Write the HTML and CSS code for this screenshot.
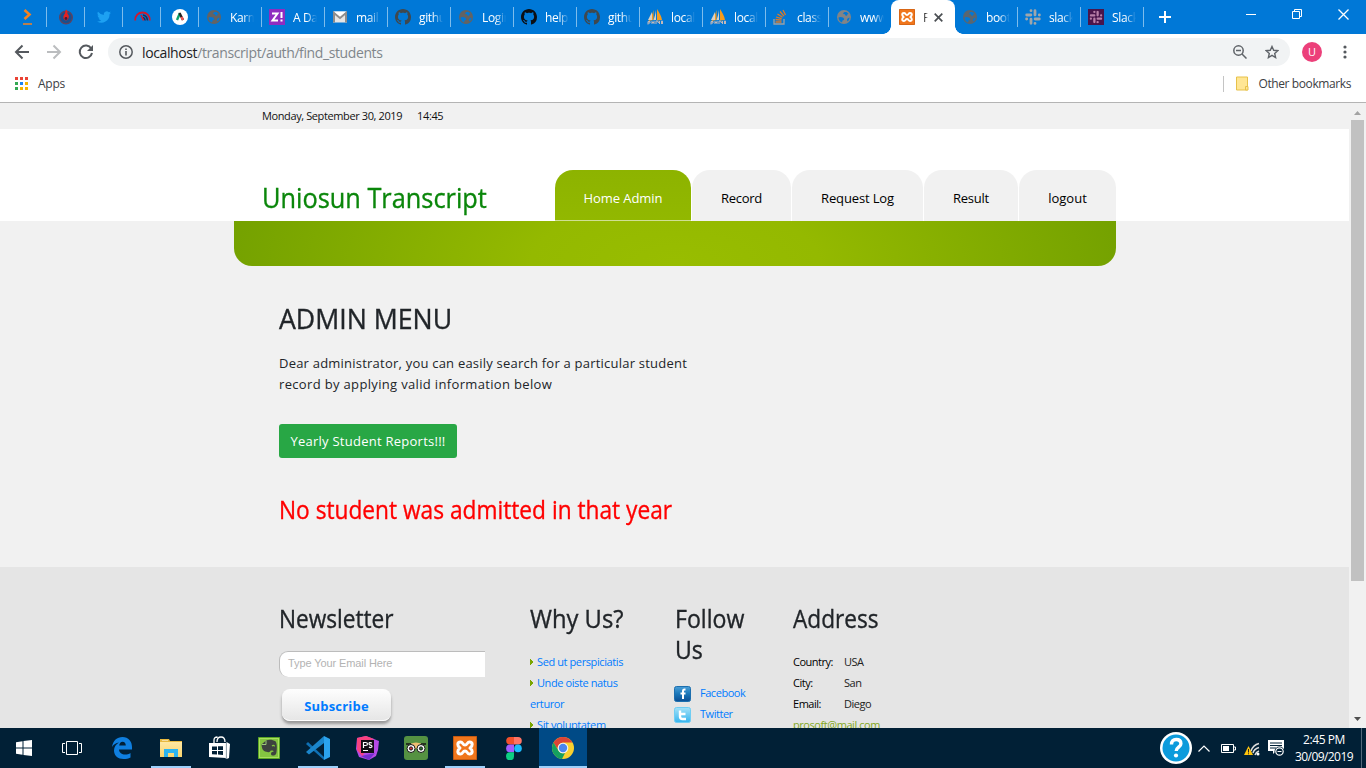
FILE: index.html
```html
<!DOCTYPE html>
<html lang="en">
<head>
<meta charset="utf-8">
<title>Find Students</title>
<link rel="stylesheet" href="styles.css">
</head>
<body>
<svg class="defs" width="0" height="0">
  <defs>
    <linearGradient id="fbg" x1="0" y1="0" x2="0" y2="1"><stop offset="0" stop-color="#4a9fd8"/><stop offset=".5" stop-color="#1976b8"/><stop offset="1" stop-color="#0a4e94"/></linearGradient>
    <linearGradient id="twg" x1="0" y1="0" x2="0" y2="1"><stop offset="0" stop-color="#a5e2f8"/><stop offset="1" stop-color="#35b4ee"/></linearGradient>
    <linearGradient id="fold" x1="0" y1="0" x2="0" y2="1"><stop offset="0" stop-color="#ffe8a3"/><stop offset="1" stop-color="#fbd46d"/></linearGradient>
    <symbol id="globe" viewBox="0 0 16 16"><circle cx="8" cy="8" r="7"/><path fill="#0078d7" d="M2.500 8.500l2-.5 2.500.5 1.200 1.300-.3 1.200-1.400.5-.5 2C4 12.800 2.600 11 2.500 8.500zM8.500 3l2 0 2 1.800-1 .5-.6 1.400-1.500-.2-.5-1.200-1.700-.4.1-1zM13.500 8.500c0 1.600-.7 3-1.900 3.900l-.7-1.600.9-1.600z"/></symbol>
    <symbol id="git" viewBox="0 0 16 16"><path d="M8 0C3.580 0 0 3.580 0 8c0 3.540 2.290 6.530 5.470 7.590.4.070.55-.17.55-.38 0-.19-.01-.82-.01-1.490-2.010.37-2.530-.49-2.690-.94-.09-.23-.48-.94-.82-1.130-.28-.15-.68-.52-.01-.53.63-.01 1.080.58 1.230.82.72 1.210 1.870.87 2.330.66.070-.52.28-.87.51-1.070-1.780-.2-3.640-.89-3.640-3.950 0-.87.31-1.590.82-2.150-.08-.2-.36-1.020.08-2.120 0 0 .67-.21 2.200.82.64-.18 1.320-.27 2-.27s1.360.09 2 .27c1.530-1.040 2.200-.82 2.200-.82.44 1.100.16 1.920.08 2.120.51.56.82 1.270.82 2.150 0 3.070-1.870 3.750-3.650 3.950.29.25.54.73.54 1.480 0 1.070-.01 1.930-.01 2.200 0 .21.15.46.55.38A8 8 0 0 0 16 8c0-4.420-3.580-8-8-8z"/></symbol>
    <symbol id="pma" viewBox="0 0 16 16"><path fill="#f89c1c" d="M6.500 1v10l-5 1C4 9 5.500 5 6.500 1zM10 0c2 3 4.500 7 5 11l-5 .5z"/><path fill="#d9d0c4" d="M5 3v8H1zM9 1v10l-2.500.3C7.500 8 8.500 5 9 1z"/><path fill="none" stroke="#c4b8b8" stroke-width="1" d="M1 15.500v-3h2v1.500H1m4-2v3m0-1.500h2m0-1.500v3m2 0v-3h1.500l1 2 1-2v3m2 0v-3h1v3"/></symbol>
    <symbol id="xampp" viewBox="0 0 24 24"><rect width="24" height="24" rx="2" fill="#f0761c"/><path fill="none" stroke="#c65a10" stroke-width="1" d="M.5.500h23v23H.5z"/><path fill="none" stroke="#fff" stroke-width="3" stroke-linecap="round" stroke-linejoin="round" d="M7.500 6C4 6 4 10 7 12c-3 2-3 6 .5 6 2.500 0 2-3 4.500-3s2 3 4.500 3c3.500 0 3.500-4 .5-6 3-2 3-6-.5-6-2.500 0-2 3-4.500 3s-2-3-4.500-3z"/></symbol>
    <symbol id="slack" viewBox="0 0 16 16"><path fill="none" stroke-width="2.800" stroke-linecap="round" d="M6 1.600v.1M1.700 6h4.200M10 1.700v4.200M14.300 6h.1M10.100 10h4.200M10 14.300v.1M6 10.100v4.200M1.600 10h.1"/></symbol>
  </defs>
</svg>

<header class="tabstrip">
  <div class="tab pin"><svg width="14" height="16" viewBox="0 0 14 16"><path d="M3.500 1l5 4.500-5 4.500" fill="none" stroke="#f58220" stroke-width="2.600"/><path d="M2 15h9" stroke="#f58220" stroke-width="1.500"/></svg></div>
  <div class="tab pin"><svg width="16" height="16" viewBox="0 0 16 16"><circle cx="8" cy="8.500" r="6.300" fill="#17508f" stroke="#5d4260" stroke-width="1.400"/><path d="M8 .5c3 2 0 3.500 2.500 5.500 1 2.500-.5 5-2.500 5.500-2-.5-3.500-2.500-2-5.500C7.500 4.500 7 2.500 8 .5z" fill="#e62020"/><circle cx="8" cy="9.500" r="1.400" fill="#421c3b"/></svg></div>
  <div class="tab pin"><svg width="14" height="14" viewBox="0 0 24 24"><path fill="#1da1f2" d="M24 4.600a10 10 0 0 1-2.800.8 5 5 0 0 0 2.100-2.700 10 10 0 0 1-3.100 1.200 4.900 4.900 0 0 0-8.400 4.500A14 14 0 0 1 1.700 3.100a4.900 4.900 0 0 0 1.500 6.600 5 5 0 0 1-2.200-.6 4.900 4.900 0 0 0 4 4.900 5 5 0 0 1-2.300.1 4.900 4.900 0 0 0 4.600 3.400A10 10 0 0 1 0 19.500a14 14 0 0 0 21.500-12.400A10 10 0 0 0 24 4.600z"/></svg></div>
  <div class="tab pin"><svg width="17" height="16" viewBox="0 0 17 16"><path fill="none" stroke="#d4172c" stroke-width="1.800" d="M1.200 11.500C1 6.500 4.500 3.500 8.500 3.500s7.500 3 7.300 8"/><path fill="none" stroke="#222a50" stroke-width="1.500" d="M9 6c3 .5 4.200 2.500 4.500 5.500M9 8.500c1.500.5 2 1.500 2.200 3"/><path stroke="#d4172c" stroke-width="1.600" d="M7 6l2.500 5.500"/></svg></div>
  <div class="tab pin"><svg width="16" height="16" viewBox="0 0 16 16"><circle cx="8" cy="8" r="8" fill="#fff"/><path d="M8 4l-3 7" stroke="#0aa06e" stroke-width="2.400"/><path d="M7.500 4l3.500 7" stroke="#222" stroke-width="2.400"/><path d="M9.500 8l1.500 3" stroke="#f0524f" stroke-width="2.400"/></svg></div>
  <div class="tab"><svg width="16" height="16" fill="#636363"><use href="#globe"/></svg><span>Karma</span></div>
  <div class="tab"><svg width="16" height="16" viewBox="0 0 16 16"><path fill="#8f2cc0" d="M0 0h16v16H0z"/><path d="M3 4.500h5.500L3.500 11.500H9M12.500 3v6M12.500 10.500v2" fill="none" stroke="#fff" stroke-width="2"/></svg><span>A Dat</span></div>
  <div class="tab"><svg width="16" height="16" viewBox="0 0 16 16"><path fill="#e6e6e6" d="M1 2.500h14v11H1z"/><path d="M2 13.500V4l6 5 6-5v9.500" fill="none" stroke="#8d8d8d" stroke-width="2"/><path fill="#fff" d="M2 2.500h12L8 7.500z"/></svg><span>mail.g</span></div>
  <div class="tab"><svg width="16" height="16" fill="#3f484e"><use href="#git"/></svg><span>githu</span></div>
  <div class="tab"><svg width="16" height="16" fill="#636363"><use href="#globe"/></svg><span>Login</span></div>
  <div class="tab"><svg width="16" height="16" fill="#0c0f14"><use href="#git"/></svg><span>help</span></div>
  <div class="tab"><svg width="16" height="16" fill="#3f484e"><use href="#git"/></svg><span>githu</span></div>
  <div class="tab"><svg width="16" height="16"><use href="#pma"/></svg><span>local</span></div>
  <div class="tab"><svg width="16" height="16"><use href="#pma"/></svg><span>local</span></div>
  <div class="tab"><svg width="16" height="16" viewBox="0 0 16 16"><path fill="none" stroke="#9aa0a5" stroke-width="1.300" d="M1 10v5h10v-5"/><path stroke="#e07a24" stroke-width="1.300" d="M2.500 13h6M2.500 10.500l6 .7M3 8l5.700 1.700M4.500 5l5 3.300M7 2.500l4 4.700M10 1l2.500 5"/></svg><span>class</span></div>
  <div class="tab last"><svg width="16" height="16" fill="#828486"><use href="#globe"/></svg><span>www</span></div>
  <div class="tab active"><svg width="16" height="16"><use href="#xampp"/></svg><span>Fi</span><svg class="x" width="9" height="9" viewBox="0 0 9 9"><path d="M.7.7l7.600 7.600M8.300.7L.7 8.300" stroke="#4b4f53" stroke-width="1.700"/></svg></div>
  <div class="tab"><svg width="16" height="16" fill="#5a6670"><use href="#globe"/></svg><span>boots</span></div>
  <div class="tab"><svg width="16" height="16" stroke="#a0a6aa"><use href="#slack"/></svg><span>slack</span></div>
  <div class="tab"><svg width="16" height="16" viewBox="0 0 16 16" stroke="#b87fa8"><path fill="#4a154b" stroke="none" d="M0 0h16v16H0z"/><use href="#slack" x="1.500" y="1.500" width="13" height="13"/></svg><span>Slack</span></div>
  <svg class="plus" width="12" height="12" viewBox="0 0 12 12"><path d="M6 0v12M0 6h12" stroke="#fff" stroke-width="2"/></svg>
  <div class="winctl">
    <svg width="11" height="11" viewBox="0 0 11 11"><path d="M0 5.500h10"/></svg>
    <svg width="11" height="11" viewBox="0 0 11 11"><path d="M.5 2.500h7v7h-7zM2.500 2.500v-2h7v7h-2"/></svg>
    <svg width="11" height="11" viewBox="0 0 11 11"><path stroke-width="1.300" d="M.5.500l10 10M10.500.500l-10 10"/></svg>
  </div>
</header>

<nav class="toolbar">
  <svg width="16" height="16" viewBox="0 0 16 16"><path d="M15 8H2M8.500 1.500L2 8l6.500 6.500" fill="none" stroke="#55595e" stroke-width="2"/></svg>
  <svg width="16" height="16" viewBox="0 0 16 16"><path d="M1 8h13M7.500 1.500L14 8l-6.500 6.500" fill="none" stroke="#bbbdbf" stroke-width="2"/></svg>
  <svg width="16" height="16" viewBox="0 0 16 16"><path d="M13.200 4.500A6.200 6.200 0 1 0 14 9" fill="none" stroke="#55595e" stroke-width="2"/><path d="M15 1v6H9z" fill="#55595e"/></svg>
  <div class="omnibox">
    <svg width="14" height="14" viewBox="0 0 14 14"><circle cx="7" cy="7" r="6.200" fill="none" stroke="#55595e" stroke-width="1.500"/><path d="M7 6v4.500M7 3.500V5" stroke="#55595e" stroke-width="1.600"/></svg>
    <span class="url"><b>localhost</b>/transcript/auth/find_students</span>
    <svg class="zoomout" width="14" height="14" viewBox="0 0 14 14"><circle cx="5.500" cy="5.500" r="4.700" fill="none" stroke="#5f6368" stroke-width="1.500"/><path d="M9 9l4.500 4.500M3 5.500h5" stroke="#5f6368" stroke-width="1.500"/></svg>
    <svg width="14" height="14" viewBox="0 0 14 14"><path d="M7 1.500l1.700 3.800 4.100.4-3.100 2.700.9 4.100L7 10.400l-3.600 2.100.9-4.100L1.200 5.700l4.100-.4z" fill="none" stroke="#5f6368" stroke-width="1.400"/></svg>
  </div>
  <span class="avatar">U</span>
  <svg class="more" width="4" height="14" viewBox="0 0 4 14" fill="#55595e"><circle cx="2" cy="2" r="1.600"/><circle cx="2" cy="7" r="1.600"/><circle cx="2" cy="12" r="1.600"/></svg>
</nav>

<div class="bookmarks">
  <svg width="13" height="13" viewBox="0 0 13 13"><path fill="#ea4335" d="M0 0h3v3H0zM5 0h3v3H5zM10 0h3v3h-3z"/><path fill="#34a853" d="M0 5h3v3H0zM0 10h3v3H0z"/><path fill="#1a84f5" d="M5 5h3v3H5z"/><path fill="#f5b400" d="M10 5h3v3h-3zM5 10h3v3H5zM10 10h3v3h-3z"/></svg>
  <span class="apps">Apps</span>
  <span class="other"><svg width="13" height="15" viewBox="0 0 13 15"><path d="M.5 1h11v13H.5z" fill="#ffe694" stroke="#e7c14a"/><path d="M9.500 10.500h2.500v3.500H9.500z" fill="#ffe694" stroke="#e7c14a"/></svg>Other bookmarks</span>
</div>

<div class="viewport">
  <main class="page">
    <div class="datebar"><span>Monday, September 30, 2019</span><span>14:45</span></div>
    <div class="masthead">
      <h1 class="brand">Uniosun Transcript</h1>
      <ul class="menu">
        <li class="m1 current">Home Admin</li><li class="m2">Record</li><li class="m3">Request Log</li><li class="m4">Result</li><li class="m5">logout</li>
      </ul>
    </div>
    <div class="band"></div>
    <section class="content">
      <h2 class="title">ADMIN MENU</h2>
      <p class="intro">Dear administrator, you can easily search for a particular student<br><span class="intro2">record by applying valid information below</span></p>
      <a class="btn">Yearly Student Reports!!!</a>
      <h2 class="alert">No student was admitted in that year</h2>
    </section>
    <footer class="footer">
      <div class="col news">
        <h3>Newsletter</h3>
        <div class="email">Type Your Email Here</div>
        <a class="subscribe">Subscribe</a>
      </div>
      <div class="col why">
        <h3 class="wide">Why Us?</h3>
        <ul class="links"><li>Sed ut perspiciatis</li><li>Unde oiste natus<br>erturor</li><li>Sit voluptatem</li></ul>
      </div>
      <div class="col follow">
        <h3 class="mid">Follow<br>Us</h3>
        <ul class="social">
          <li><svg width="17" height="16" viewBox="0 0 17 16"><rect x=".5" y=".5" width="16" height="15" rx="2" fill="url(#fbg)" stroke="#1d6fae"/><path d="M11.500 3.500h-1q-1.500 0-1.500 1.500v8M6.500 7.500h5" fill="none" stroke="#fff" stroke-width="2"/></svg>Facebook</li>
          <li><svg width="17" height="16" viewBox="0 0 17 16"><rect x=".5" y=".5" width="16" height="15" rx="2" fill="url(#twg)" stroke="#6fcdf3"/><path d="M6 3.500v6q0 2.500 2.500 2.500H12M6 7h5.500" fill="none" stroke="#fff" stroke-width="2.400"/></svg>Twitter</li>
        </ul>
      </div>
      <div class="col address">
        <h3>Address</h3>
        <div class="rows"><span>Country:</span><span>USA</span><span>City:</span><span>San</span><span>Email:</span><span>Diego</span></div>
        <a class="mail">prosoft@mail.com</a>
      </div>
    </footer>
  </main>
  <aside class="scroll">
    <svg width="7" height="4" viewBox="0 0 7 4"><path d="M0 4L3.500 0 7 4z" fill="#a3a3a3"/></svg>
    <div class="thumb"></div>
    <svg class="down" width="7" height="4" viewBox="0 0 7 4"><path d="M0 0L3.500 4 7 0z" fill="#505050"/></svg>
  </aside>
</div>

<div class="taskbar">
  <div class="app"><svg width="16" height="16" viewBox="0 0 16 16" fill="#fff"><path d="M0 2.300L6.500 1.300v6.200H0zM7.500 1.100L16 0v7.500H7.500zM0 8.500h6.500v6.200L0 13.700zM7.500 8.500H16V16l-8.500-1.100z"/></svg></div>
  <div class="app view"><svg width="20" height="14" viewBox="0 0 20 14" fill="none" stroke="#fff"><path d="M4.500.500h11v13h-11zM3 2.500H.5v9H3M17 2.500h2.500v9H17"/></svg></div>
  <div class="app edge"><svg width="20" height="22" viewBox="0 0 20 22"><path fill="#0f7fe0" d="M0 10C1 3.500 5 0 10.500 0 16.500 0 20 4.500 20 10v2.500H7c.2 3.500 3 5 6 5 2.200 0 4-.5 5.500-1.500v4.500c-2 1-4.300 1.500-7 1.500C6 22 2 18.500 2 13.500 2 10 4 7 7 5.500 4 6 1.500 7.500 0 10zm7.200-1.500h6.600C13.800 6 12.500 4.700 10.600 4.700S7.500 6.300 7.200 8.500z"/></svg></div>
  <div class="app run"><svg width="22" height="18" viewBox="0 0 22 18"><path fill="#e9b93f" d="M0 0h9l1 2h12v3H0z"/><path fill="url(#fold)" d="M0 3h22v15H0z"/><path fill="#2cb4f0" d="M4 10h14v8h-4v-4H8v4H4z"/><path fill="#fff" opacity=".5" d="M2 1h6v1H2z"/></svg></div>
  <div class="app store"><svg width="21" height="24" viewBox="0 0 21 24"><path d="M5 7V4q0-3 3.500-3M8 6q0-5 4-5t4 5" fill="none" stroke="#fff" stroke-width="1.300"/><path d="M0 7h17v15L0 21zM17.500 6l3.500 2-1 14-2.500 1z" fill="#fff"/><path d="M17 7v16" stroke="#c9d3da" stroke-width=".6"/><path d="M3 10.500h5V14H3zM9 10.200h5V14H9zM3 15h5v3.500l-5-.3zM9 15h5v4l-5-.4z" fill="#012036"/></svg></div>
  <div class="app"><svg width="22" height="22" viewBox="0 0 22 22"><path fill="#a9e05e" stroke="#5ba525" d="M.5.500h21v21H.5z"/><path fill="#6db32e" d="M2 2h18v18H2z" opacity=".6"/><path fill="#3d433f" d="M3.500 7.500L8 3.500c3-1.500 7-.8 9.500.7 1.500 2 1.800 7 .8 12-.5 2.500-5 3.500-5.300.8 0-1.800 1-2.500 2.500-2.300.3-1.500-1.500-1.200-2.800-1.200-.5 1.500-1.700 2-3.200 1.500-3.500-.5-5.500-1.500-6-7.500z"/><path d="M8 3.500v4H3.800" fill="none" stroke="#9cc978"/><path d="M14 9q1.500-1.300 2.600.3" fill="none" stroke="#81c63c" stroke-width="1.200"/></svg></div>
  <div class="app run"><svg width="24" height="24" viewBox="0 0 24 24"><path fill="#0f70b4" d="M2 6l16 15V24L0 8z"/><path d="M18 0v7L3 18.500 0 16 18 0z" fill="#1b86cc"/><path d="M18 0l6 3v18l-6 3z" fill="#2ba3ee"/></svg></div>
  <div class="app"><svg width="23" height="24" viewBox="0 0 23 24"><path fill="#b54ae5" d="M1 2l9-2 13 5-1 9-2 6-7 4-10-3-3-8z"/><path fill="#f9427f" d="M1 2l9-2 8 3-8 3-3 15-6-7z"/><path fill="#752fcf" d="M5 20l14-3-6 7z"/><path fill="#100d14" d="M5 4h13v13H5z"/><path d="M7.500 12V6.500h2q2 0 2 1.500t-2 1.500h-2M16 7q-3-1-3 .7c0 1.800 3 1 3 2.600 0 1.500-2 1.500-3 .7M7 14.500h5" fill="none" stroke="#fff" stroke-width="1.200"/></svg></div>
  <div class="app"><svg width="24" height="24" viewBox="0 0 24 24"><rect width="24" height="24" rx="3" fill="#559242"/><path d="M6 8q6-3 12 0l-6 5z" fill="#efbe72"/><path d="M2 8h5M17 8h5" stroke="#151515" stroke-width="1.500"/><circle cx="7" cy="12.500" r="4" fill="#fff" stroke="#161616"/><circle cx="17" cy="12.500" r="4" fill="#fff" stroke="#161616"/><circle cx="7" cy="12.500" r="1.600" fill="#db2d38" stroke="#161616"/><circle cx="17" cy="12.500" r="1.600" fill="#24752d" stroke="#161616"/></svg></div>
  <div class="app run"><svg width="24" height="24"><use href="#xampp"/></svg></div>
  <div class="app"><svg width="16" height="23" viewBox="0 0 16 23"><path fill="#f2502c" d="M8 0v7.600H4A3.800 3.800 0 0 1 4 0z"/><path fill="#ff7465" d="M8 0h4a3.800 3.800 0 0 1 0 7.600H8z"/><path fill="#a35cff" d="M8 7.600v7.700H4a3.800 3.800 0 0 1 0-7.700z"/><circle cx="12" cy="11.400" r="3.800" fill="#1bbcfe"/><path fill="#0dcf82" d="M8 15.300v3.900a4 4 0 1 1-4-3.900z"/></svg></div>
  <div class="app run chrome"><svg width="22" height="22" viewBox="0 0 22 22"><circle cx="11" cy="11" r="11" fill="#f9d02f"/><path fill="#dc4437" d="M1.500 5.500A11 11 0 0 1 20.500 5.500H11a5.500 5.500 0 0 0-5 7.500z"/><path fill="#15a05f" d="M1.500 5.500l5 8.300A5.500 5.500 0 0 0 13 16l-3 6A11 11 0 0 1 1.500 5.500z"/><circle cx="11" cy="11" r="5.300" fill="#f3f3f3"/><circle cx="11" cy="11" r="4.200" fill="#4a86f0"/></svg></div>
  <div class="tray">
    <svg class="help" width="32" height="32" viewBox="0 0 32 32"><circle cx="16" cy="16" r="16" fill="#fff"/><circle cx="16" cy="16" r="13.500" fill="#0c9bdc"/><path d="M11.500 12.500q0-5 4.700-5t4.700 4.200c0 3.500-4.700 3.500-4.700 7.300" fill="none" stroke="#fff" stroke-width="3.400"/><circle cx="16" cy="23.500" r="2.100" fill="#fff"/></svg>
    <svg class="chev" width="12" height="7" viewBox="0 0 12 7"><path d="M.5 6.500L6 1l5.500 5.500" fill="none" stroke="#fff" stroke-width="1.200"/></svg>
    <svg class="batt" width="15" height="9" viewBox="0 0 15 9"><path d="M.5.500h12v8H.5zM13 3h1.500v3H13" fill="none" stroke="#fff"/><path d="M2 2h6v5H2z" fill="#fff"/></svg>
    <svg class="wifi" width="16" height="14" viewBox="0 0 16 14"><path d="M7 9Q9 3 15 1.500M9 11q1-4 6-5.500M11 13q1-3 4-4" fill="none" stroke="#ddd" stroke-width="1.500"/><circle cx="14" cy="12" r="1.500" fill="#fff"/><path d="M4.500 4L9 13H0z" fill="#ffc40c"/><path d="M4.500 7v3.500M4.500 11.300v1" stroke="#222"/></svg>
    <svg class="note" width="17" height="17" viewBox="0 0 17 17"><path fill="#fff" d="M0 0h16v11H8l-3 3v-3H0z"/><path d="M2 3h12M2 5.500h12M2 8h6" stroke="#012036"/><circle cx="11.500" cy="11.500" r="5" fill="#012036"/><circle cx="11.500" cy="11.500" r="3.700" fill="none" stroke="#fff" stroke-width="1.200"/><path d="M9.500 11.500h4" stroke="#fff"/></svg>
    <div class="clock"><span>2:45 PM</span><span class="date">30/09/2019</span></div>
    <i class="peek"></i>
  </div>
</div>
</body>
</html>
```
FILE: styles.css
```css
* { box-sizing: border-box; }
body { margin: 0; width: 1366px; height: 768px; overflow: hidden; display: flex; flex-direction: column; background: #fff; font: 12px "Open Sans", "Noto Sans", sans-serif; color: #212529; }
svg { display: block; flex: none; }
h1, h2, h3, p, ul { margin: 0; padding: 0; list-style: none; font-weight: 400; }
h1, h2, h3 { -webkit-text-stroke: .35px currentColor; }
span, li, a { white-space: nowrap; }
.defs { position: absolute; }

.tabstrip { height: 34px; flex: none; display: flex; background: #0078d7; padding-left: 8px; color: #fff; }
.tab { width: 63px; height: 34px; flex: none; display: flex; align-items: center; padding-left: 7px; gap: 8px; background: linear-gradient(#7dbcec, #7dbcec) right 7px / 1px 20px no-repeat; }
.tab.pin { width: 38px; padding: 0; justify-content: center; }
.tab.pin:first-child { width: 39px; }
.tab span { width: 24px; overflow: hidden; letter-spacing: -.35px; -webkit-mask-image: linear-gradient(90deg, #000 55%, transparent); mask-image: linear-gradient(90deg, #000 55%, transparent); }
.tab.last { background: none; width: 62px; }
.tab.active { width: 64px; padding-left: 8px; background: #fff; border-radius: 8px 8px 0 0; color: #444; position: relative; z-index: 1; }
.tab.active::before, .tab.active::after { content: ""; position: absolute; bottom: 0; width: 8px; height: 8px; }
.tab.active::before { left: -8px; background: radial-gradient(circle at 0 0, transparent 7.500px, #fff 8px); }
.tab.active::after { right: -8px; background: radial-gradient(circle at 100% 0, transparent 7.500px, #fff 8px); }
.tab.active span { width: 5px; margin-right: -2px; }
.plus { margin: 11px 0 0 15px; }
.winctl { display: flex; gap: 35px; margin: 9px 0 0 75px; fill: none; stroke: #fff; }

.toolbar { height: 36px; flex: none; display: flex; align-items: center; padding-left: 14px; gap: 16px; }
.omnibox { width: 1182px; height: 28px; margin-left: -2px; border-radius: 14px; background: #f1f3f4; display: flex; align-items: center; padding: 0 11px; }
.url { margin-left: 9px; font-size: 14px; letter-spacing: -.39px; color: #80868b; }
.url b { font-weight: 400; color: #202124; }
.zoomout { margin: 0 18px 0 auto; }
.avatar { width: 20px; height: 20px; margin-left: -4px; border-radius: 50%; background: #ec407a; color: #fff; text-align: center; line-height: 20px; font-size: 11px; }
.more { margin-left: 5px; }

.bookmarks { height: 33px; flex: none; display: flex; align-items: center; padding: 0 15px 5px 15px; border-bottom: 1px solid #b4b4b4; color: #3c4043; }
.apps { margin-left: 10px; letter-spacing: -.25px; }
.other { margin-left: auto; height: 16px; display: flex; align-items: center; gap: 9px; padding-left: 12px; border-left: 1px solid #c4c4c4; letter-spacing: -.4px; }

.viewport { height: 625px; flex: none; display: flex; overflow: hidden; }
.page { width: 1349px; height: 625px; overflow: hidden; background: #f1f1f1; }
.datebar { height: 26px; padding-left: 262px; display: flex; gap: 15px; line-height: 26px; font-size: 11px; letter-spacing: -.39px; color: #111; }
.masthead { height: 92px; background: #fff; display: flex; padding-left: 262px; }
.brand { width: 293px; padding-top: 48px; font-size: 28px; line-height: 40px; color: #0a860a; transform: scaleX(.905); transform-origin: 0 0; white-space: nowrap; }
.menu { display: flex; gap: 1px; padding-top: 41px; font-size: 13px; color: #000; }
.menu li { height: 51px; line-height: 56px; text-align: center; border-radius: 18px 18px 0 0; background: #f1f1f1; }
.menu .current { background: linear-gradient(#8db300, #92b800); color: #fff; border-bottom: 1px solid #cfdf92; }
.m1 { width: 136px; letter-spacing: -.06px; }
.m2 { width: 99px; letter-spacing: -.27px; }
.m3 { width: 131px; letter-spacing: -.13px; }
.m4 { width: 94px; letter-spacing: -.24px; }
.m5 { width: 97px; }
.band { width: 882px; height: 45px; margin-left: 234px; border-radius: 0 0 18px 18px; background: radial-gradient(ellipse 480px 190px at 50% 90%, #98bd00 0, #94b900 30%, #719f00 100%); }
.content { height: 301px; padding-left: 279px; }
.title { padding-top: 32px; font-size: 28px; line-height: 40px; transform: scaleX(.953); transform-origin: 0 0; }
.intro { margin-top: 15px; font-size: 13px; line-height: 21px; letter-spacing: .22px; }
.intro2 { letter-spacing: .34px; }
.btn { display: block; width: 178px; height: 34px; margin-top: 29px; border-radius: 3px; background: #28a745; color: #fff; text-align: center; font-size: 13px; line-height: 34px; letter-spacing: .25px; }
.alert { margin-top: 32px; font-size: 25px; line-height: 38px; color: #f00; transform: scaleX(.908); transform-origin: 0 0; }

.footer { height: 161px; background: #e5e5e5; display: flex; padding: 36px 0 0 279px; font-size: 11px; line-height: 21px; }
.footer h3 { font-size: 25px; line-height: 31px; transform: scaleX(.905); transform-origin: 0 0; white-space: nowrap; }
.footer h3.wide { transform: scaleX(.95); }
.footer h3.mid { transform: scaleX(.925); }
.news { width: 251px; }
.why { width: 145px; }
.follow { width: 118px; }
.email { width: 206px; height: 26px; margin-top: 17px; padding-left: 8px; border: solid #bcbcbc; border-width: 1px 0 0 1px; border-radius: 9px 0 0 9px; background: #fff; color: #b3b3b3; font: 11px/23px "Liberation Sans", Arial, sans-serif; letter-spacing: -.1px; }
.subscribe { display: block; width: 109px; height: 32px; margin: 12px 0 0 3px; border-radius: 8px; background: linear-gradient(#fefefe, #e6e6e6); border-bottom: 1px solid #fff; box-shadow: 0 3px 3px #999; color: #007bff; font-weight: 700; font-size: 13px; line-height: 34px; text-align: center; letter-spacing: .2px; }
.links { margin-top: 17px; color: #007bff; letter-spacing: -.4px; }
.links li { background: linear-gradient(to top right, #7aa500 50%, transparent 52%) 0 8px / 3px 3px no-repeat, linear-gradient(to bottom right, #7aa500 50%, transparent 52%) 0 11px / 3px 3px no-repeat; text-indent: 7px; }
.social { margin-top: 17px; color: #007bff; letter-spacing: -.46px; }
.social li { display: flex; height: 21px; margin-left: -1px; align-items: center; gap: 9px; }
.social svg { margin-top: 2px; }
.rows { margin-top: 17px; display: grid; grid-template-columns: 51px 60px; color: #222; letter-spacing: -.48px; }
.rows span:nth-child(odd) { color: #000; }
.mail { display: block; color: #83a81d; letter-spacing: -.44px; }

.scroll { width: 17px; height: 625px; background: #f1f1f1; display: flex; flex-direction: column; align-items: center; padding-top: 8px; }
.thumb { width: 13px; height: 461px; margin-top: 5px; background: #c1c1c1; }
.down { margin: auto 0 7px; }

.taskbar { height: 40px; flex: none; display: flex; background: #012036; }
.app { width: 48px; height: 40px; margin-right: 1px; display: flex; align-items: center; justify-content: center; border-bottom: 2px solid transparent; padding-top: 2px; }
.app.view, .app.store { padding-right: 2px; }
.app.run { background: linear-gradient(#9dd0fb, #9dd0fb) center bottom / 40px 2px no-repeat border-box; }
.app.chrome { background: #004a86; border-bottom-color: #9dd0fb; }
.tray { margin-left: auto; display: flex; align-items: center; color: #fff; }
.chev { margin-left: 6px; }
.batt { margin-left: 11px; }
.wifi { margin: 2px 0 0 8px; }
.note { margin-left: 8px; }
.clock { width: 60px; margin-left: 9px; display: flex; flex-direction: column; align-items: center; line-height: 17px; letter-spacing: -.41px; padding-bottom: 1px; }
.date { letter-spacing: -.57px; }
.peek { width: 1px; height: 40px; margin: 0 4px 0 7px; background: #52687a; }
```
